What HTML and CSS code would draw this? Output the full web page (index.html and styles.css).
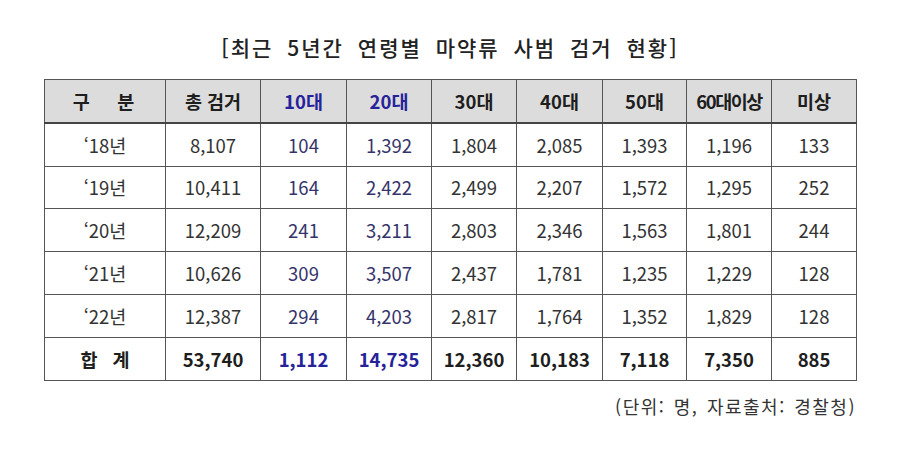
FILE: index.html
```html
<!DOCTYPE html>
<html lang="ko">
<head>
<meta charset="utf-8">
<link rel="stylesheet" href="styles.css">
</head>
<body>
<div class="page">
  <h1 class="title">[최근 5년간 연령별 마약류 사범 검거 현황]</h1>
  <table class="stats">
    <colgroup>
      <col class="c0"><col class="c1"><col class="c2"><col class="c3"><col class="c4"><col class="c5"><col class="c6"><col class="c7"><col class="c8">
    </colgroup>
    <thead>
      <tr>
        <th class="wide">구 &nbsp; 분</th><th>총 검거</th><th class="blue">10대</th><th class="blue">20대</th><th>30대</th><th>40대</th><th>50대</th><th class="tight">60대이상</th><th>미상</th>
      </tr>
    </thead>
    <tbody>
      <tr><td>‘18년</td><td>8,107</td><td class="nblue">104</td><td class="nblue">1,392</td><td>1,804</td><td>2,085</td><td>1,393</td><td>1,196</td><td>133</td></tr>
      <tr><td>‘19년</td><td>10,411</td><td class="nblue">164</td><td class="nblue">2,422</td><td>2,499</td><td>2,207</td><td>1,572</td><td>1,295</td><td>252</td></tr>
      <tr><td>‘20년</td><td>12,209</td><td class="nblue">241</td><td class="nblue">3,211</td><td>2,803</td><td>2,346</td><td>1,563</td><td>1,801</td><td>244</td></tr>
      <tr><td>‘21년</td><td>10,626</td><td class="nblue">309</td><td class="nblue">3,507</td><td>2,437</td><td>1,781</td><td>1,235</td><td>1,229</td><td>128</td></tr>
      <tr><td>‘22년</td><td>12,387</td><td class="nblue">294</td><td class="nblue">4,203</td><td>2,817</td><td>1,764</td><td>1,352</td><td>1,829</td><td>128</td></tr>
      <tr class="total"><td class="sum">합 계</td><td>53,740</td><td class="blue">1,112</td><td class="blue">14,735</td><td>12,360</td><td>10,183</td><td>7,118</td><td>7,350</td><td>885</td></tr>
    </tbody>
  </table>
  <p class="note">(단위: 명, 자료출처: 경찰청)</p>
</div>
</body>
</html>
```
FILE: styles.css
```css
html, body {
  margin: 0;
  padding: 0;
  background: #ffffff;
}
.page {
  width: 900px;
  height: 467px;
  padding-top: 34px;
  box-sizing: border-box;
  font-family: "Noto Sans CJK KR", "Noto Sans", sans-serif;
  color: #222;
}
.title {
  margin: 0 0 19px 0;
  text-align: center;
  font-size: 21px;
  line-height: 26px;
  font-weight: 500;
  letter-spacing: 2px;
  word-spacing: 6px;
  color: #222;
}
.stats {
  margin-left: 44px;
  width: 812px;
  border-collapse: collapse;
  table-layout: fixed;
}
.c0 { width: 121px; }
.c1 { width: 95px; }
.c2 { width: 86px; }
.c3 { width: 85px; }
.c4 { width: 85px; }
.c5 { width: 86px; }
.c6 { width: 84px; }
.c7 { width: 85px; }
.c8 { width: 85px; }
.stats th, .stats td {
  border: 1.5px solid #555;
  text-align: center;
  padding: 0;
  height: 41.8px;
  font-size: 18.5px;
  color: #333;
}
.stats th {
  background: #dcdcdc;
  font-weight: 700;
  color: #1e1e1e;
  border-bottom: 2px solid #444;
}
.stats th.blue, .stats td.blue {
  color: #26229a;
}
.stats td.nblue {
  color: #35346a;
}
.stats th.wide {
  letter-spacing: 3px;
}
.stats td.sum {
  letter-spacing: 5px;
  padding-left: 5px;
}
.stats th.tight {
  letter-spacing: -1.5px;
}
.total td {
  font-weight: 700;
  color: #1e1e1e;
}
.note {
  margin: 14px 44px 0 0;
  text-align: right;
  font-size: 18px;
  line-height: 22px;
  color: #333;
  letter-spacing: 1.5px;
  word-spacing: 2px;
}
```
